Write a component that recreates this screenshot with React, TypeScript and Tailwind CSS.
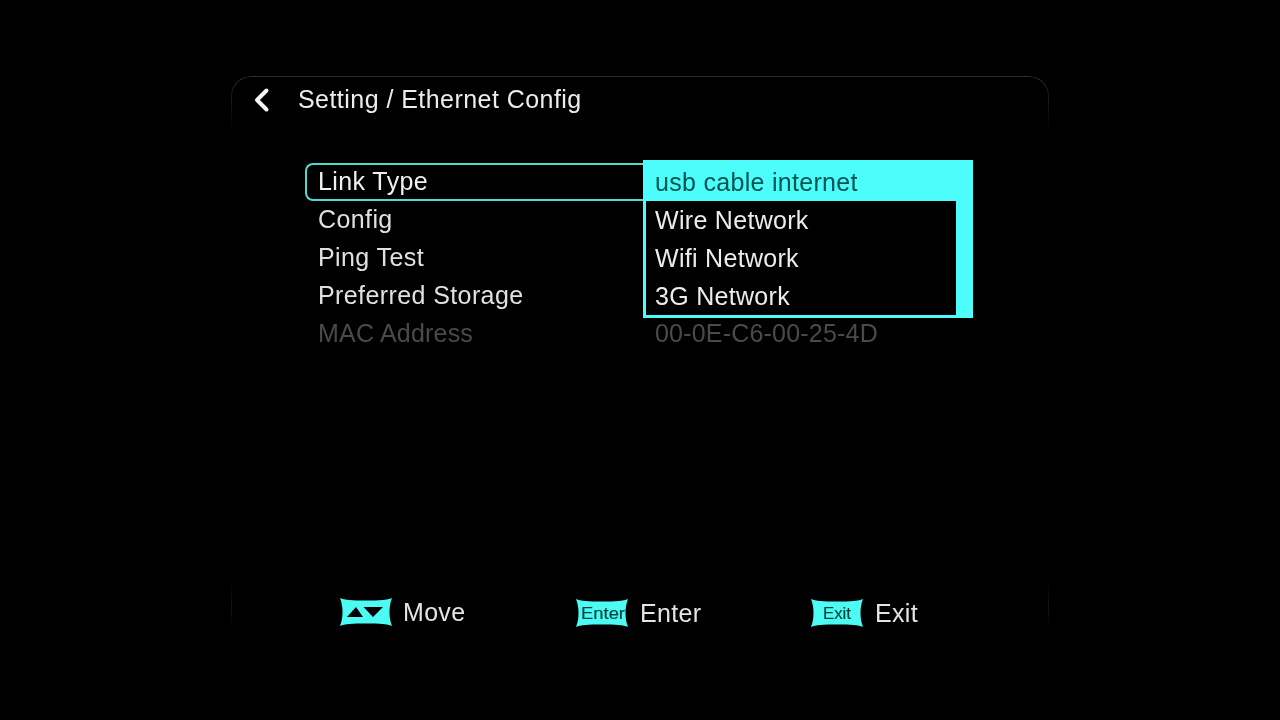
const SANS = "font-['Liberation_Sans',Arial,sans-serif]";

function Badge({ label }: { label?: string }) {
  return (
    <svg width="52" height="28" viewBox="0 0 52 28" className="shrink-0">
      <path
        d="M0 0 C5 2 12 2.5 26 2.5 C40 2.5 47 2 52 0 C50 5 49.5 10 49.5 14 C49.5 18 50 23 52 28 C47 26 40 25.5 26 25.5 C12 25.5 5 26 0 28 C2 23 2.5 18 2.5 14 C2.5 10 2 5 0 0Z"
        fill="#4dfbf5"
      />
      {label ? (
        <text
          x={label === "Enter" ? 27 : 26}
          y="20"
          textAnchor="middle"
          fontSize="16"
          fontFamily="Liberation Sans, Arial, sans-serif"
          fill="#03423c"
          stroke="#03423c"
          strokeWidth="0.15"
          textLength={label === "Enter" ? 44 : 28}
          lengthAdjust="spacingAndGlyphs"
        >
          {label}
        </text>
      ) : (
        <>
          <path d="M7 19 L16 9 L23 19 Z" fill="#000" />
          <path d="M23.5 9 L43 9 L33 19 Z" fill="#000" />
        </>
      )}
    </svg>
  );
}

const rows = [
  { label: "Link Type", active: true },
  { label: "Config" },
  { label: "Ping Test" },
  { label: "Preferred Storage" },
];

function FooterItem({ label, badge, cls }: { label: string; badge?: string; cls: string }) {
  return (
    <div className={`flex items-center ${cls}`}>
      <Badge label={badge} />
      <span className="text-[25px] leading-[28px] tracking-[0.3px] text-[#e4e4e4]">{label}</span>
    </div>
  );
}

export default function App() {
  return (
    <div className={`w-[1280px] h-[720px] bg-black flex justify-center pt-[76px] overflow-hidden blur-[0.5px] ${SANS}`}>
      <div className="relative w-[818px] h-[552px] flex flex-col">
        <div className="absolute left-0 right-0 top-0 h-[56px] rounded-t-[20px] border border-b-0 border-[#2c2c2c] [mask-image:linear-gradient(to_bottom,black,transparent)]" />
        <div className="absolute left-0 right-0 bottom-0 h-[50px] border-x border-[#161616] [mask-image:linear-gradient(to_top,transparent,black_40%,transparent)]" />

        <header className="flex items-center h-[48px] pl-[21px] shrink-0">
          <svg width="20" height="26" viewBox="0 0 20 26" className="shrink-0">
            <path d="M14.5 3.5 L5 13 L14.5 22.5" fill="none" stroke="#f4f4f4" strokeWidth="4" strokeLinecap="round" strokeLinejoin="round" />
          </svg>
          <h1 className="ml-[26px] pb-[2px] text-[25px] leading-[28px] tracking-[0.45px] font-normal text-[#ececec] whitespace-nowrap">
            Setting / Ethernet Config
          </h1>
        </header>

        <div className="relative mt-[39px] ml-[74px] w-[668px] flex flex-col text-[25px] tracking-[0.4px]">
          {rows.map((r) => (
            <div
              key={r.label}
              className={`h-[38px] w-[338px] flex items-center ${r.active ? "pl-[11px] border-2 border-r-0 border-[#4fd8d0] rounded-l-[8px] text-[#f0f0f0]" : "pl-[13px] text-[#e0e0e0]"}`}
            >
              {r.label}
            </div>
          ))}
          <div className="h-[38px] flex items-center pl-[13px] tracking-[0.2px] text-[#4a4a4a]">
            <span className="w-[337px]">MAC Address</span>
            <span>00-0E-C6-00-25-4D</span>
          </div>

          <div className="absolute left-[338px] top-[-3px] w-[330px] h-[158px] bg-[#4dfdfb] flex flex-col tracking-[0.3px]">
            <div className="h-[41px] pl-[12px] pt-[4px] flex items-center text-[#04544f] shrink-0">
              usb cable internet
            </div>
            <div className="ml-[3px] w-[310px] h-[114px] bg-black flex flex-col">
              {["Wire Network", "Wifi Network", "3G Network"].map((t) => (
                <div key={t} className="h-[38px] pl-[9px] pt-[2px] flex items-center text-[#ececec]">
                  {t}
                </div>
              ))}
            </div>
          </div>
        </div>

        <footer className="mt-auto pl-[109px] h-[28px] flex items-center relative -top-0.5">
          <FooterItem label="Move" cls="w-[236px] gap-[11px]" />
          <FooterItem label="Enter" badge="Enter" cls="w-[235px] gap-3 translate-y-px" />
          <FooterItem label="Exit" badge="Exit" cls="w-[110px] gap-3 translate-y-px" />
        </footer>
      </div>
    </div>
  );
}
